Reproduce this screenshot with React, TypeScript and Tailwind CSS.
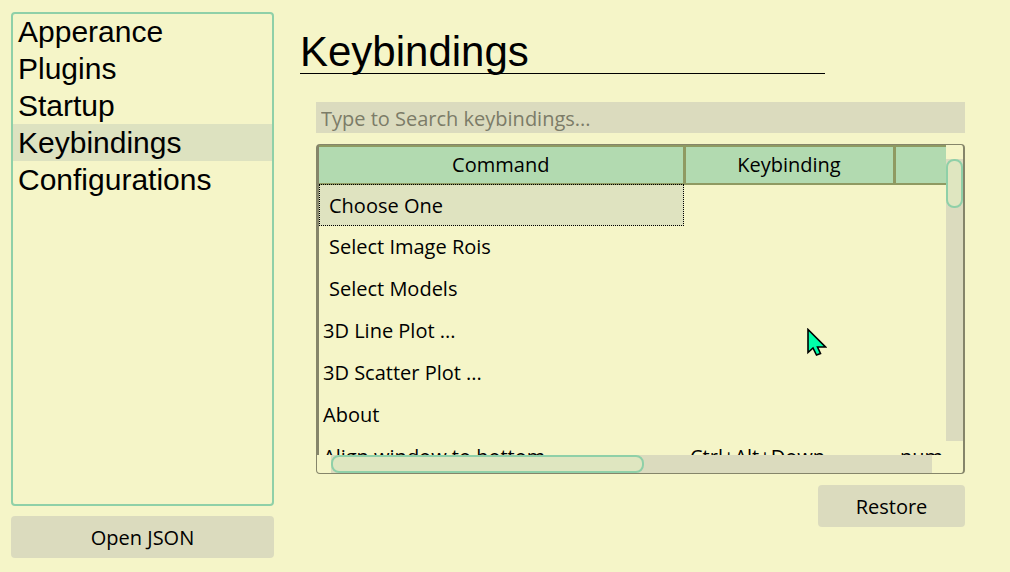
import React, { useState } from "react";

const sections = ["Apperance", "Plugins", "Startup", "Keybindings", "Configurations"];

type Row = { command: string; keybinding: string; when: string; indent?: boolean };

const rows: Row[] = [
  { command: "Choose One", keybinding: "", when: "", indent: true },
  { command: "Select Image Rois", keybinding: "", when: "", indent: true },
  { command: "Select Models", keybinding: "", when: "", indent: true },
  { command: "3D Line Plot ...", keybinding: "", when: "" },
  { command: "3D Scatter Plot ...", keybinding: "", when: "" },
  { command: "About", keybinding: "", when: "" },
  { command: "Align window to bottom", keybinding: "Ctrl+Alt+Down", when: "num" },
];

function Sidebar({ active, onSelect }: { active: string; onSelect: (name: string) => void }) {
  return (
    <aside className="flex w-[263px] shrink-0 flex-col gap-[10px]">
      <nav className="flex-1 rounded border-2 border-[#8fd0a8]">
        <ul className="-mt-px">
          {sections.map((name) => (
            <li key={name}>
              <button
                type="button"
                onClick={() => onSelect(name)}
                className={
                  name === active
                    ? "block h-[37px] w-full bg-[#dde2c0] pl-[5px] text-left text-[30px] leading-[37px]"
                    : "block h-[37px] w-full pl-[5px] text-left text-[30px] leading-[37px]"
                }
              >
                {name}
              </button>
            </li>
          ))}
        </ul>
      </nav>
      <button
        type="button"
        className="h-[42px] rounded bg-[#dbdbbe] pt-[2px] font-['Open_Sans','Noto_Sans',sans-serif] text-[20px]"
      >
        Open JSON
      </button>
    </aside>
  );
}

function BindingTable() {
  return (
    <div className="grid min-h-0 flex-1 grid-cols-[minmax(0,1fr)_17px] grid-rows-[minmax(0,1fr)_18px] rounded-sm border border-r-2 border-[#85856a]">
      <div className="overflow-hidden border-l-2 border-[#85856a]">
        <table className="w-[760px] table-fixed border-collapse text-left">
          <colgroup>
            <col className="w-[365px]" />
            <col className="w-[210px]" />
            <col />
          </colgroup>
          <thead>
            <tr className="h-[38px] bg-[#b2dab0]">
              <th className="border-y-2 border-r-3 border-[#8f9a62] p-0 text-center font-normal">Command</th>
              <th className="border-y-2 border-r-3 border-[#8f9a62] p-0 text-center font-normal">Keybinding</th>
              <th className="border-y-2 border-[#8f9a62] p-0" />
            </tr>
          </thead>
          <tbody>
            {rows.map((row, i) => (
              <tr key={row.command} className="h-[42px]">
                <td
                  className={
                    i === 0
                      ? "bg-[#dfe3c0] p-0 outline-1 -outline-offset-1 outline-dotted outline-black"
                      : "p-0"
                  }
                >
                  <span className={row.indent ? "pl-[10px]" : "pl-[4px]"}>{row.command}</span>
                </td>
                <td className="p-0 pl-[6px]">{row.keybinding}</td>
                <td className="p-0 pl-[6px]">{row.when}</td>
              </tr>
            ))}
          </tbody>
        </table>
      </div>
      <div className="pt-[14px] pb-[14px]">
        <div className="h-full bg-[#dbdbbe]">
          <div className="h-[49px] rounded-lg border-2 border-[#8fd0a8] bg-[#dfe6c0]" />
        </div>
      </div>
      <div className="pr-[14px] pl-[14px]">
        <div className="h-full bg-[#dbdbbe]">
          <div className="h-full w-[52%] rounded-lg border-2 border-[#8fd0a8] bg-[#dfe6c0]" />
        </div>
      </div>
    </div>
  );
}

function Cursor() {
  return (
    <svg
      className="pointer-events-none absolute top-[328px] left-[807px]"
      width="20"
      height="29"
      viewBox="0 0 20 29"
      aria-hidden="true"
    >
      <path
        d="M1 1.5V24.5L6 20L9.5 27L13.5 25.5L10.5 19H18.5Z"
        fill="#00ffaa"
        stroke="#000"
        strokeWidth="1.6"
      />
    </svg>
  );
}

export default function App() {
  const [active, setActive] = useState("Keybindings");
  return (
    <div className="relative flex h-screen gap-[26px] overflow-hidden bg-[#f5f5c8] pt-3 pr-[45px] pb-[14px] pl-[11px] font-['Liberation_Sans',Arial,sans-serif] text-black">
      <Sidebar active={active} onSelect={setActive} />
      <main className="flex min-w-0 flex-1 flex-col pt-[18px] pb-[31px]">
        <h1 className="w-[79%] border-b border-black text-[42px] leading-[43px]">{active}</h1>
        <section className="mt-7 flex min-h-0 flex-1 flex-col gap-[11px] pl-4 font-['Open_Sans','Noto_Sans',sans-serif] text-[20px]">
          <input
            type="text"
            aria-label="Search keybindings"
            placeholder="Type to Search keybindings..."
            className="h-[31px] w-full bg-[#dbdbbe] px-[5px] pt-px outline-none placeholder:text-[#7c7c68]"
          />
          <BindingTable />
          <button type="button" className="h-[42px] w-[147px] self-end rounded bg-[#dbdbbe] pt-[2px]">
            Restore
          </button>
        </section>
      </main>
      <Cursor />
    </div>
  );
}
